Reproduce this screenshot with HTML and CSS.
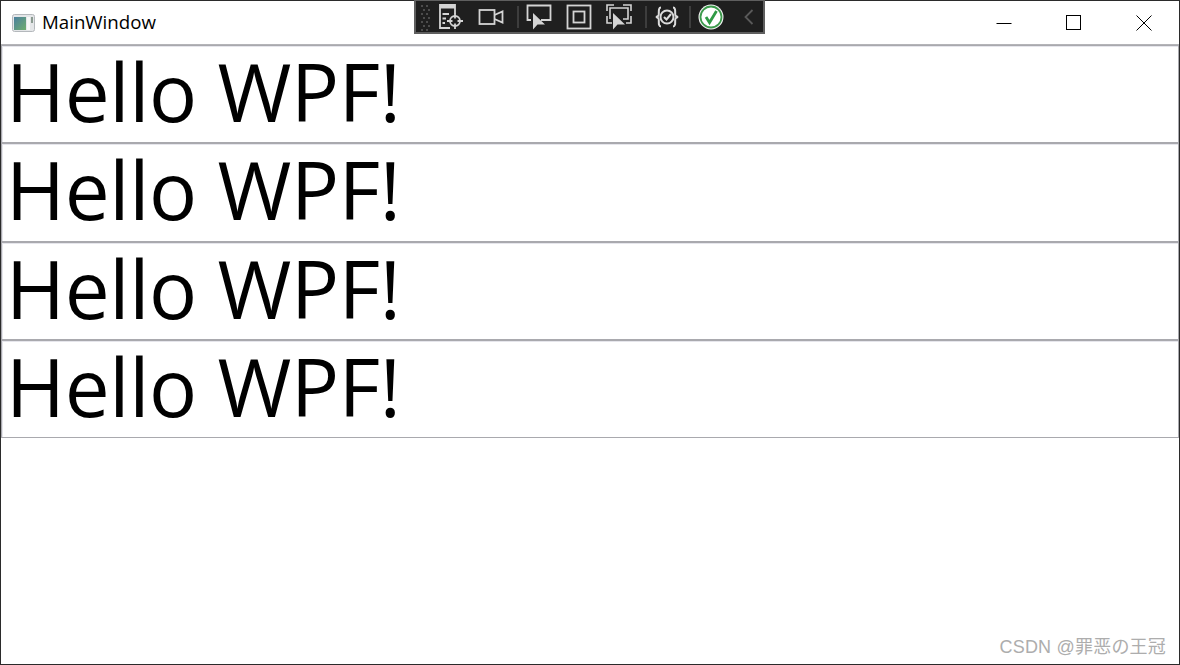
FILE: index.html
```html
<!DOCTYPE html>
<html lang="en">
<head>
<meta charset="utf-8">
<title>MainWindow</title>
<link rel="stylesheet" href="styles.css">
</head>
<body>
<div class="window">
  <header class="titlebar">
    <svg class="app-icon" width="23" height="18" viewBox="0 0 23 18">
      <defs><linearGradient id="g" x1="0" y1="0" x2="1" y2="1"><stop offset="0" stop-color="#4a7f9f"/><stop offset="1" stop-color="#6fae6c"/></linearGradient></defs>
      <rect x="0.5" y="0.5" width="22" height="17" rx="2" fill="#e4e6e8" stroke="#b4b8bc"/>
      <rect x="2" y="3" width="12" height="13" fill="url(#g)"/>
      <rect x="15" y="3" width="3" height="13" fill="#f6f8f6"/>
      <rect x="19" y="3" width="2" height="6" fill="#8a9a90"/>
    </svg>
    <span class="title">MainWindow</span>
    <div class="caption">
      <button class="cap"><svg width="16" height="16" viewBox="0 0 16 16"><path d="M0.5 8.5H15.5" stroke="#000" fill="none"/></svg></button>
      <button class="cap"><svg width="16" height="16" viewBox="0 0 16 16"><rect x="0.5" y="0.5" width="14" height="14" stroke="#000" fill="none"/></svg></button>
      <button class="cap"><svg width="16" height="16" viewBox="0 0 16 16"><path d="M0.5 0.5L15.5 15.5M15.5 0.5L0.5 15.5" stroke="#000" fill="none"/></svg></button>
    </div>
  </header>
  <main class="rows">
    <div class="row">Hello WPF!</div>
    <div class="row">Hello WPF!</div>
    <div class="row">Hello WPF!</div>
    <div class="row">Hello WPF!</div>
  </main>
</div>

<div class="devbar">
  <svg class="grip" width="10" height="28" viewBox="0 0 10 28">
    <path d="M1 2h2v2H1zM6 2h2v2H6zM3 6h2v2H3zM8 6h2v2H8zM1 10h2v2H1zM6 10h2v2H6zM3 14h2v2H3zM8 14h2v2H8zM1 18h2v2H1zM6 18h2v2H6zM3 22h2v2H3zM8 22h2v2H8zM1 26h2v2H1zM6 26h2v2H6z" fill="#4c4c4c"/>
  </svg>
  <svg class="ic" width="26" height="26" viewBox="0 0 26 26" fill="none" stroke="#d4d4d4" stroke-width="1.800">
    <path d="M12 24H2V1H17V10"/>
    <path d="M2 3H17" stroke-width="3"/>
    <path d="M4.500 10H11M4.500 14.500H8M4.500 19H7"/>
    <circle cx="17" cy="17" r="5"/>
    <path d="M17 9.500V14.500M17 19.500V25M9 17H14.500M19.500 17H25"/>
  </svg>
  <svg class="ic" width="26" height="26" viewBox="0 0 26 26" fill="none" stroke="#d4d4d4" stroke-width="1.800">
    <rect x="1.500" y="6" width="15" height="14"/>
    <path d="M16.500 11L24.500 7.500V18.500L16.500 15"/>
  </svg>
  <span class="sep"></span>
  <svg class="ic" width="26" height="26" viewBox="0 0 26 26" fill="none" stroke="#d4d4d4" stroke-width="1.800">
    <path d="M5 16H1.500V1.500H24.500V16H15"/>
    <path d="M7 9V25.500L11.500 20.500H19Z" fill="#d4d4d4" stroke="none"/>
  </svg>
  <svg class="ic" width="26" height="26" viewBox="0 0 26 26" fill="none" stroke="#d4d4d4" stroke-width="1.800">
    <rect x="1.500" y="1.500" width="23" height="23"/>
    <rect x="7.500" y="7.500" width="11" height="11"/>
  </svg>
  <svg class="ic" width="26" height="26" viewBox="0 0 26 26" fill="none" stroke="#d4d4d4" stroke-width="1.600">
    <path d="M1 7V1H8M17 1H25V7M1 12V19H6M25 12V19H20"/>
    <path d="M4 15V4H22V15H17"/>
    <path d="M7 9V25.500L11.500 20.500H19Z" fill="#d4d4d4" stroke="none"/>
  </svg>
  <span class="sep"></span>
  <svg class="ic ic-tight" width="26" height="26" viewBox="0 0 26 26" fill="none" stroke="#dcdcdc" stroke-width="2">
    <path d="M7 3.500C3.500 3.500 5.500 10 4.500 11.500C4 12.500 2 13 2 13C2 13 4 13.500 4.500 14.500C5.500 16 3.500 22.500 7 22.500"/>
    <path d="M19 3.500C22.500 3.500 20.500 10 21.500 11.500C22 12.500 24 13 24 13C24 13 22 13.500 21.500 14.500C20.500 16 22.500 22.500 19 22.500"/>
    <circle cx="13" cy="13" r="6.500"/>
    <path d="M10 13L12.500 15.500L17 10"/>
  </svg>
  <span class="sep"></span>
  <svg class="ic" width="26" height="26" viewBox="0 0 26 26">
    <circle cx="13" cy="13" r="12.500" fill="#f4f4f4"/>
    <circle cx="13" cy="13" r="10.500" fill="#fff" stroke="#3c9a4c" stroke-width="1.800"/>
    <path d="M8 13L11.500 18.500L18.500 7" fill="none" stroke="#2f9a45" stroke-width="2.800"/>
  </svg>
  <svg class="chev" width="10" height="16" viewBox="0 0 10 16"><path d="M8.500 1L1.500 8L8.500 15" fill="none" stroke="#5a5a5a" stroke-width="1.800"/></svg>
</div>

<div class="watermark">CSDN @罪恶の王冠</div>
</body>
</html>
```

FILE: styles.css
```css
* { box-sizing: border-box; }
html, body { margin: 0; padding: 0; }
body {
  width: 1180px;
  height: 665px;
  overflow: hidden;
  background: #fff;
  position: relative;
  font-family: "Open Sans", "Noto Sans", sans-serif;
}
.window {
  width: 1180px;
  height: 665px;
  border: 1px solid #2b2b2b;
  display: flex;
  flex-direction: column;
}
.titlebar {
  height: 44px;
  flex: none;
  display: flex;
  align-items: center;
  padding-left: 11px;
  border-bottom: 1px solid #b4b4b8;
}
.app-icon { flex: none; margin-right: 7px; }
.title { font-size: 18.700px; color: #000; margin-bottom: 2px; }
.caption { margin-left: auto; display: flex; }
.cap {
  width: 70px;
  height: 43px;
  border: 0;
  padding: 0;
  background: none;
  display: flex;
  align-items: center;
  justify-content: center;
}
.rows { display: flex; flex-direction: column; }
.row {
  height: 98px;
  border: 1px solid #a9a9ae;
  box-shadow: inset 1px 1px 0 #e6e6ec;
  font-size: 80px;
  line-height: 90px;
  letter-spacing: -0.300px;
  padding-left: 4px;
  color: #000;
  white-space: nowrap;
}
.row:nth-child(2) { height: 99px; }
.devbar {
  position: absolute;
  left: 414px;
  top: 0;
  width: 351px;
  height: 34px;
  background: #1f1f1f;
  border: 2px solid #5f5f5f;
  border-top-width: 1px;
  display: flex;
  align-items: center;
  padding-left: 4px;
}
.grip { flex: none; margin-right: 8px; }
.ic { flex: none; margin-right: 14px; }
.ic-tight { margin-right: 10px; }
.sep { flex: none; width: 2px; height: 22px; background: #3d3d3d; margin-right: 7px; margin-left: -1px; }
.chev { flex: none; margin-left: 6px; }
.watermark {
  position: absolute;
  right: 14px;
  bottom: 7px;
  font-family: "Liberation Sans", "Noto Sans CJK JP", sans-serif;
  font-size: 18px;
  letter-spacing: 0.200px;
  color: #adadad;
}
```
